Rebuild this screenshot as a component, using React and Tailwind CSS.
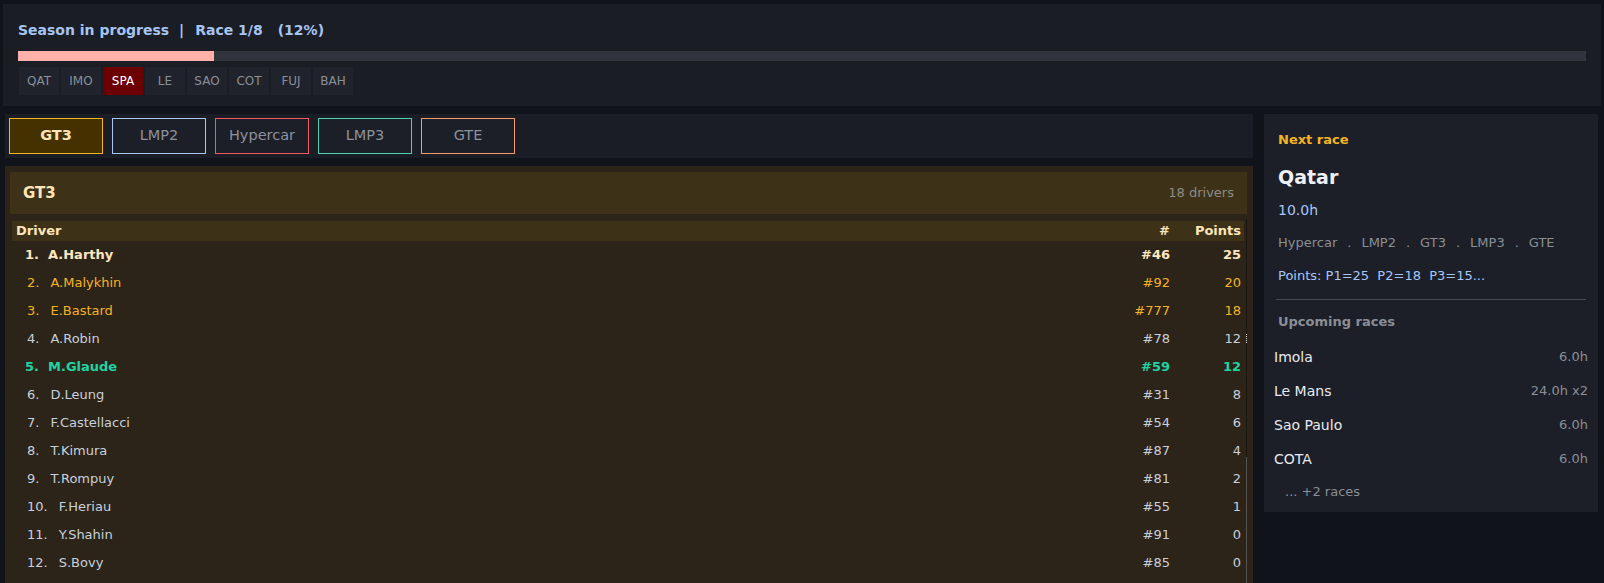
const races = ['QAT', 'IMO', 'SPA', 'LE', 'SAO', 'COT', 'FUJ', 'BAH'];

const tabs = [
  { label: 'GT3', cls: 'border-[#f3b62b] bg-[#453000] text-[#fde5b8] font-bold' },
  { label: 'LMP2', cls: 'border-[#a9c6fb] bg-[#1c1f28] text-[#8c919b]' },
  { label: 'Hypercar', cls: 'border-[#ef5b5b] bg-[#1c1f28] text-[#8c919b]' },
  { label: 'LMP3', cls: 'border-[#4fd3b1] bg-[#1c1f28] text-[#8c919b]' },
  { label: 'GTE', cls: 'border-[#f39d6a] bg-[#1c1f28] text-[#8c919b]' },
];

const drivers = [
  { name: 'A.Harthy', num: 46, pts: 25, tone: 'leader' },
  { name: 'A.Malykhin', num: 92, pts: 20, tone: 'podium' },
  { name: 'E.Bastard', num: 777, pts: 18, tone: 'podium' },
  { name: 'A.Robin', num: 78, pts: 12 },
  { name: 'M.Glaude', num: 59, pts: 12, tone: 'me' },
  { name: 'D.Leung', num: 31, pts: 8 },
  { name: 'F.Castellacci', num: 54, pts: 6 },
  { name: 'T.Kimura', num: 87, pts: 4 },
  { name: 'T.Rompuy', num: 81, pts: 2 },
  { name: 'F.Heriau', num: 55, pts: 1 },
  { name: 'Y.Shahin', num: 91, pts: 0 },
  { name: 'S.Bovy', num: 85, pts: 0 },
];

const toneCls = {
  leader: 'text-[#fde6c0] font-bold',
  podium: 'text-[#f4b224]',
  me: 'text-[#1fd3a2] font-bold',
};

const upcoming = [
  { name: 'Imola', len: '6.0h' },
  { name: 'Le Mans', len: '24.0h x2' },
  { name: 'Sao Paulo', len: '6.0h' },
  { name: 'COTA', len: '6.0h' },
];

function SeasonBar() {
  return (
    <div className="h-[102px] shrink-0 bg-[#1a1d24] pt-[17px] pl-[15px] pr-[15px]">
      <div className="flex text-[14px] leading-[18px] font-bold text-[#a6c4f2] whitespace-pre">
        <span>Season in progress</span>
        <span className="ml-[10px] mr-[11px]">|</span>
        <span>Race 1/8</span>
        <span className="ml-[15px]">(12%)</span>
      </div>
      <div className="mt-[12px] h-[10px] bg-[#31343c]">
        <div className="h-full w-[12.5%] bg-[#ffb1a9]" />
      </div>
      <div className="mt-[6px] flex gap-[2px] pl-px">
        {races.map((r) => (
          <div
            key={r}
            className={`w-[40px] h-[28px] flex items-center justify-center text-[12px] ${
              r === 'SPA' ? 'bg-[#6c0000] text-white' : 'bg-[#20232b] text-[#8a8f99]'
            }`}
          >
            {r}
          </div>
        ))}
      </div>
    </div>
  );
}

function Standings() {
  return (
    <div className="flex-1 flex flex-col bg-[#2c2418] pt-[6px] pl-[5px] pr-[6px]">
      {/* Class header */}
      <div className="h-[42px] shrink-0 bg-[#3d3118] flex items-center justify-between pl-[13px] pr-[13px]">
        <span className="text-[15px] font-bold text-[#fde5b8]">GT3</span>
        <span className="text-[13px] text-[#8d8c88]">18 drivers</span>
      </div>

      <div className="mt-[5px] flex-1 flex">
        <div className="flex-1 pt-[2px] px-[2px]">
          <div className="h-[20px] bg-[#3d3118] grid grid-cols-[1fr_80px_71px] items-center text-[13px] font-bold text-[#fde5b8] pl-[4px] pr-[3px]">
            <span>Driver</span>
            <span className="text-right">#</span>
            <span className="text-right">Points</span>
          </div>
          {drivers.map((d, i) => {
            const cls = toneCls[d.tone] || 'text-[#c8d0dc]';
            const bold = d.tone === 'leader' || d.tone === 'me';
            return (
              <div
                key={d.name}
                className={`h-[28px] grid grid-cols-[1fr_80px_71px] items-center text-[13px] pr-[3px] ${cls}`}
              >
                <span className={`flex ${bold ? 'pl-[13px]' : 'pl-[15px]'}`}>
                  <span>{i + 1}.</span>
                  <span className={bold ? 'ml-[9px]' : 'ml-[11px]'}>{d.name}</span>
                </span>
                <span className="text-right">#{d.num}</span>
                <span className="text-right">{d.pts}</span>
              </div>
            );
          })}
        </div>
        {/* thin scrollbar */}
        <div className="w-px flex flex-col">
          <div className="h-[115px] bg-[#1a1710]" />
          <div className="h-[9px] border-l border-dotted border-[#d8d8d8]" />
          <div className="h-[114px] bg-[#1a1710]" />
          <div className="flex-1 bg-[#55534f]" />
        </div>
      </div>
    </div>
  );
}

function NextRace() {
  return (
    <div className="w-[334px] h-[398px] shrink-0 bg-[#1c1f27] pt-[16px] flex flex-col">
      <div className="px-[14px]">
        <div className="text-[13px] leading-[20px] font-bold text-[#f5b424]">Next race</div>
        <div className="mt-[13px] text-[19px] leading-[28px] font-bold text-[#eef0f4]">Qatar</div>
        <div className="mt-[9px] text-[14px] leading-[20px] text-[#a8c5f8]">10.0h</div>
        <div className="mt-[13px] flex gap-[10px] text-[13px] leading-[20px] text-[#8a8e96]">
          <span>Hypercar</span>
          <span>.</span>
          <span>LMP2</span>
          <span>.</span>
          <span>GT3</span>
          <span>.</span>
          <span>LMP3</span>
          <span>.</span>
          <span>GTE</span>
        </div>
        <div className="mt-[13px] text-[13px] leading-[20px] text-[#a8c5f8] whitespace-pre">
          {'Points: P1=25  P2=18  P3=15...'}
        </div>
      </div>
      <div className="mt-[13px] mx-[12px] h-px bg-[#46494f]" />
      <div className="mt-[12px] px-[14px] text-[13px] leading-[20px] font-bold text-[#8a8e96]">
        Upcoming races
      </div>
      <div className="mt-[8px] px-[10px]">
        {upcoming.map((u) => (
          <div key={u.name} className="h-[34px] flex items-center justify-between">
            <span className="text-[14px] text-[#e8eaee]">{u.name}</span>
            <span className="text-[13px] text-[#8a8e96]">{u.len}</span>
          </div>
        ))}
      </div>
      <div className="mt-[6px] pl-[21px] text-[13px] leading-[20px] text-[#8a8e96]">... +2 races</div>
    </div>
  );
}

export default function App() {
  return (
    <div
      className="h-screen overflow-hidden flex flex-col bg-[#10131a] pt-[4px] px-[3px]"
      style={{ fontFamily: '"DejaVu Sans", Verdana, sans-serif' }}
    >
      <SeasonBar />

      <div className="mt-[8px] flex-1 min-h-0 flex items-start gap-[11px] pl-[2px]">
        <div className="w-[1248px] self-stretch flex flex-col gap-[8px]">
          {/* Class tabs */}
          <div className="h-[44px] shrink-0 bg-[#1a1d25] flex gap-[9px] py-[4px] pl-[4px]">
            {tabs.map((t) => (
              <div
                key={t.label}
                className={`w-[94px] h-[36px] border flex items-center justify-center text-[14.5px] ${t.cls}`}
              >
                {t.label}
              </div>
            ))}
          </div>
          <Standings />
        </div>
        <NextRace />
      </div>
    </div>
  );
}
